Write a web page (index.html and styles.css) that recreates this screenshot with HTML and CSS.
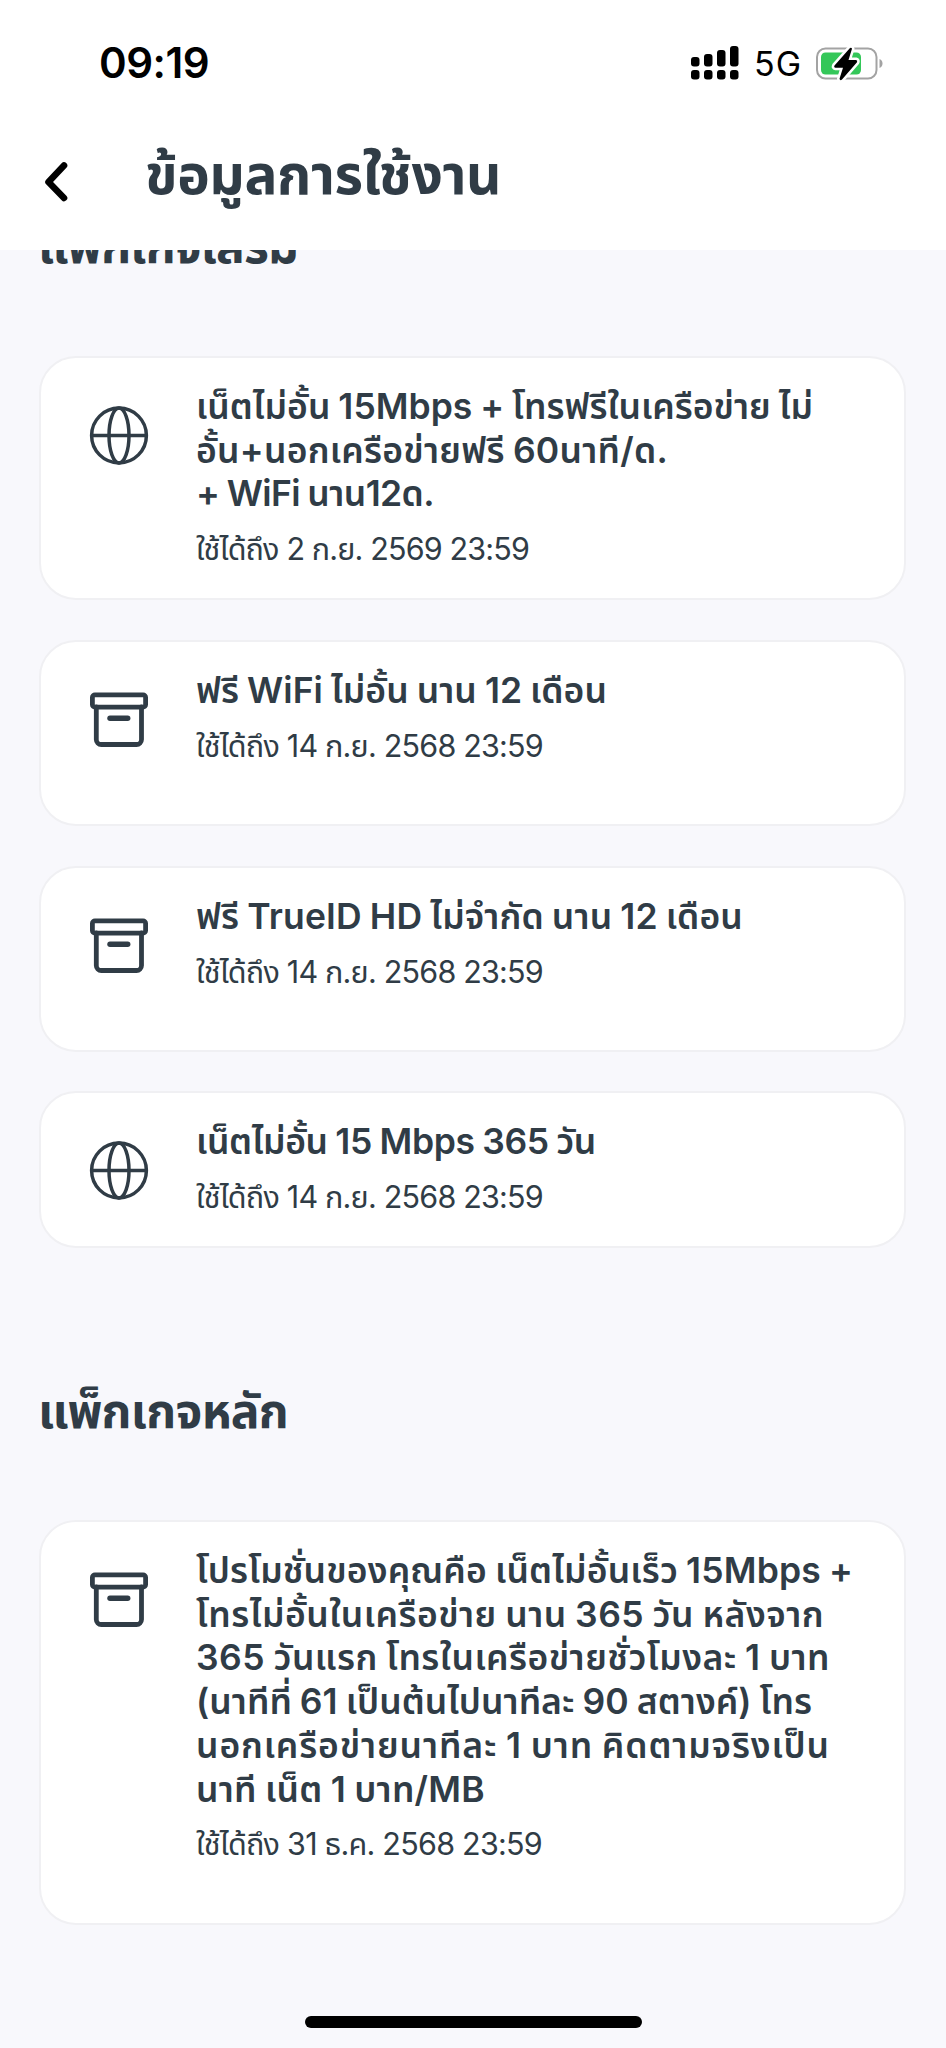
FILE: index.html
```html
<!DOCTYPE html>
<html lang="th">
<head>
<meta charset="utf-8">
<title>ข้อมูลการใช้งาน</title>
<link rel="stylesheet" href="styles.css">
</head>
<body>
<svg class="sprite" aria-hidden="true">
  <symbol id="globe" viewBox="0 0 60 60">
    <g fill="none" stroke="currentColor" stroke-width="3.5">
      <circle cx="30" cy="30.500" r="27.400"/>
      <ellipse cx="30" cy="30.500" rx="10" ry="27.400"/>
      <path d="M2.4 30.500H57.6"/>
    </g>
  </symbol>
  <symbol id="box" viewBox="0 0 60 60">
    <g fill="none" stroke="currentColor" stroke-width="4.8" stroke-linecap="round" stroke-linejoin="round">
      <rect x="3.4" y="5.9" width="53.2" height="12.200" rx="2.5"/>
      <path d="M7.3 18V50.500a5 5 0 0 0 5 5H47.500a5 5 0 0 0 5-5V18"/>
      <path d="M21 29.300H38.700" stroke-width="5.400"/>
    </g>
  </symbol>
</svg>
<div class="screen">
  <header class="top">
    <div class="status">
      <span class="time" data-w="110">09:19</span>
      <div class="indicators">
        <svg class="signal" width="48" height="34" viewBox="0 0 48 34">
          <rect x="0" y="11" width="8.500" height="9.500" rx="3"/><rect x="13" y="8" width="8.500" height="12.500" rx="3"/><rect x="26" y="4" width="8.500" height="16.500" rx="3"/><rect x="39" y="0" width="8.500" height="20.500" rx="3"/>
          <rect x="0" y="24" width="8.500" height="9.500" rx="3"/><rect x="13" y="24" width="8.500" height="9.500" rx="3"/><rect x="26" y="24" width="8.500" height="9.500" rx="3"/><rect x="39" y="24" width="8.500" height="9.500" rx="3"/>
        </svg>
        <span class="net" data-w="44">5G</span>
        <svg class="battery" width="68" height="36" viewBox="0 0 68 36">
          <rect x="1" y="2.500" width="59.500" height="30" rx="8.500" fill="#fff" stroke="#a3a3a3" stroke-width="2"/>
          <path d="M63.500 13c2 .8 3 2.500 3 4.500s-1 3.700-3 4.500z" fill="#a3a3a3"/>
          <rect x="5" y="6.500" width="40" height="22" rx="4.500" fill="#34c759"/>
          <path d="M34 2 18.500 19.500q-1 2 1 2.300H27l-3.500 11q.5 2.200 2.500.8L41 16.300q.8-2-1-2.400H32.500L36 2.700q-.5-1.600-2-.7z" fill="#000" stroke="#fff" stroke-width="5" stroke-linejoin="round" paint-order="stroke"/>
        </svg>
      </div>
    </div>
    <div class="nav">
      <svg class="back" width="24" height="42" viewBox="0 0 24 42"><path d="M20 4.500 4.500 21 20 37" fill="none" stroke="#000" stroke-width="6.600" stroke-linecap="round" stroke-linejoin="round"/></svg>
      <h1 class="title" data-w="356">ข้อมูลการใช้งาน</h1>
    </div>
  </header>
  <main class="content">
    <h2 class="section section-extra"><span data-w="260">แพ็กเกจเสริม</span></h2>
    <div class="list">
      <article class="card card-1">
        <svg class="icon"><use href="#globe"/></svg>
        <div class="body">
          <h3 class="name"><span data-w="617">เน็ตไม่อั้น 15Mbps + โทรฟรีในเครือข่าย ไม่</span><span data-w="472">อั้น+นอกเครือข่ายฟรี 60นาที/ด.</span><span data-w="238">+ WiFi นาน12ด.</span></h3>
          <p class="until"><span data-w="333">ใช้ได้ถึง 2 ก.ย. 2569 23:59</span></p>
        </div>
      </article>
      <article class="card card-2">
        <svg class="icon"><use href="#box"/></svg>
        <div class="body">
          <h3 class="name"><span data-w="411">ฟรี WiFi ไม่อั้น นาน 12 เดือน</span></h3>
          <p class="until"><span data-w="347">ใช้ได้ถึง 14 ก.ย. 2568 23:59</span></p>
        </div>
      </article>
      <article class="card card-2">
        <svg class="icon"><use href="#box"/></svg>
        <div class="body">
          <h3 class="name"><span data-w="547">ฟรี TrueID HD ไม่จำกัด นาน 12 เดือน</span></h3>
          <p class="until"><span data-w="347">ใช้ได้ถึง 14 ก.ย. 2568 23:59</span></p>
        </div>
      </article>
      <article class="card card-4">
        <svg class="icon"><use href="#globe"/></svg>
        <div class="body">
          <h3 class="name"><span data-w="400">เน็ตไม่อั้น 15 Mbps 365 วัน</span></h3>
          <p class="until"><span data-w="347">ใช้ได้ถึง 14 ก.ย. 2568 23:59</span></p>
        </div>
      </article>
    </div>
    <h2 class="section section-main"><span data-w="250">แพ็กเกจหลัก</span></h2>
    <article class="card card-5">
      <svg class="icon"><use href="#box"/></svg>
      <div class="body">
        <h3 class="name"><span data-w="657">โปรโมชั่นของคุณคือ เน็ตไม่อั้นเร็ว 15Mbps +</span><span data-w="628">โทรไม่อั้นในเครือข่าย นาน 365 วัน หลังจาก</span><span data-w="634">365 วันแรก โทรในเครือข่ายชั่วโมงละ 1 บาท</span><span data-w="616">(นาทีที่ 61 เป็นต้นไปนาทีละ 90 สตางค์) โทร</span><span data-w="634">นอกเครือข่ายนาทีละ 1 บาท คิดตามจริงเป็น</span><span data-w="289">นาที เน็ต 1 บาท/MB</span></h3>
        <p class="until"><span data-w="346">ใช้ได้ถึง 31 ธ.ค. 2568 23:59</span></p>
      </div>
    </article>
  </main>
  <footer class="home"><div class="home-bar"></div></footer>
</div>
<script src="fit.js"></script>
</body>
</html>
```
FILE: fit.js
```js
// Tracks each text line so that it fills its intended width.
document.querySelectorAll('[data-w]').forEach(function (el) {
  var goal = Number(el.dataset.w);
  el.style.letterSpacing = '0px';
  var base = el.getBoundingClientRect().width;
  el.style.letterSpacing = '1px';
  var step = el.getBoundingClientRect().width - base;
  if (step > 0) el.style.letterSpacing = ((goal - base) / step).toFixed(3) + 'px';
});
```
FILE: styles.css
```css
* { box-sizing: border-box; margin: 0; padding: 0; }
body {
  width: 946px;
  background: #f8f8fc;
  color: #303c46;
  font-family: Inter, "Noto Sans Thai", "Noto Sans", sans-serif;
}
.sprite { position: absolute; width: 0; height: 0; }
.screen { display: flex; flex-direction: column; height: 2048px; overflow: hidden; }
.top { height: 250px; flex: none; background: #fff; }
.status { height: 126px; padding: 38px 62px 0 99px; display: flex; justify-content: space-between; color: #000; }
.time { align-self: flex-start; font-size: 42px; line-height: 50px; font-weight: 600; white-space: nowrap; }
.indicators { display: flex; align-items: flex-start; padding-top: 8px; }
.signal { margin-right: 15px; }
.net { font-size: 34px; line-height: 36px; font-weight: 400; margin: 0 18px 0 0; width: 44px; white-space: nowrap; }
.nav { display: flex; padding-left: 44px; }
.back { margin-top: 35px; }
.title { align-self: flex-start; margin: 13px 0 0 77px; font-size: 55px; line-height: 70px; font-weight: 700; white-space: nowrap; }
.content { flex: none; height: 1766px; padding: 0 40px; overflow: hidden; }
.section { font-size: 48px; line-height: 56px; font-weight: 700; white-space: nowrap; }
.section span { margin-left: -2px; }
.section-extra { margin-top: -32px; }
.section-main { margin-top: 135px; }
.list { display: grid; gap: 40px; margin-top: 82px; }
.card { display: flex; gap: 48px; width: 867px; margin-left: -1px; padding: 27px 0 0 47px; border: 2px solid #f0f0f3; border-radius: 37px; background: #fff; }
.card-1 { height: 244px; }
.card-2 { height: 186px; }
.card-4 { height: 157px; margin-top: -1px; }
.card-5 { height: 405px; margin-top: 81px; }
.icon { width: 60px; height: 60px; margin: 20px -1px 0 1px; flex: none; }
.name { font-size: 35.5px; line-height: 43.7px; font-weight: 570; word-spacing: -1px; }
.name span { display: table; white-space: nowrap; }
.until { margin-top: 14px; font-size: 30.5px; line-height: 38px; font-weight: 370; white-space: nowrap; }
.home { display: flex; justify-content: center; }
.home-bar { width: 337px; height: 12px; border-radius: 6px; background: #000; }
```
